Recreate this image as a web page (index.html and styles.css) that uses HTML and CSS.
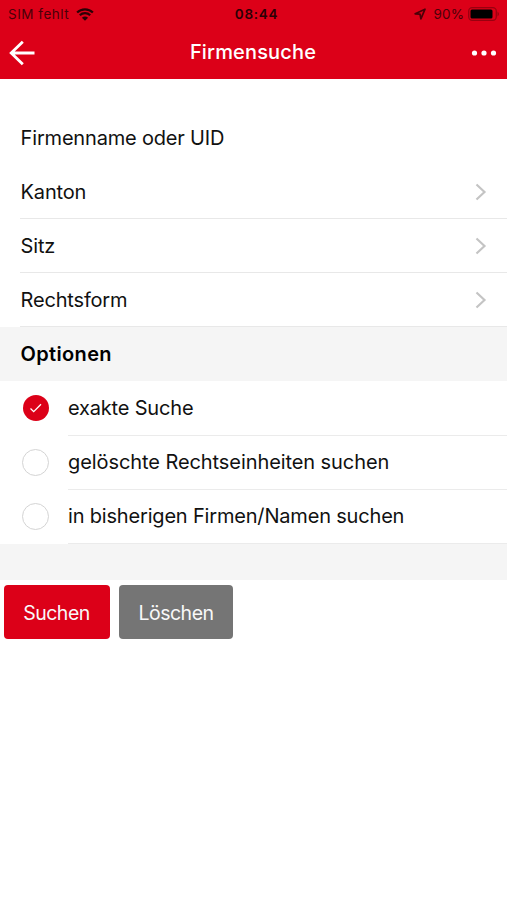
FILE: index.html
```html
<!DOCTYPE html>
<html lang="de">
<head>
<meta charset="utf-8">
<title>Firmensuche</title>
<link rel="stylesheet" href="styles.css">
</head>
<body>
<header class="header">
  <div class="status">
    <div class="status-left">
      <span class="carrier">SIM fehlt</span>
      <svg class="wifi" width="18" height="13" viewBox="0 0 18 13"><path d="M1.1 4.5C5.4.2 12.6.2 16.9 4.5M3.8 7.3c2.8-2.8 7.6-2.8 10.4 0" fill="none" stroke="currentColor" stroke-width="2.2"/><path d="M9 12.8 5.9 9.7c1.7-1.6 4.500-1.600 6.200 0z" fill="currentColor"/></svg>
    </div>
    <span class="time">08:44</span>
    <div class="status-right">
      <svg class="locate" width="12" height="12" viewBox="0 0 12 12"><path d="M11 1.200 1.200 5.800 6 6.200 6.900 10.800z" fill="none" stroke="currentColor" stroke-width="1.700" stroke-linejoin="round"/></svg>
      <span class="percent">90%</span>
      <svg class="battery" width="32" height="14" viewBox="0 0 32 14"><rect x=".7" y=".7" width="27.600" height="12.600" rx="3.500" fill="none" stroke="#99000f" stroke-width="1.300"/><rect x="2.500" y="2.500" width="22" height="9" rx="1.500" fill="#000"/><path d="M29.500 4.500q3 2.500 0 5z" fill="#99000f"/></svg>
    </div>
  </div>
  <div class="nav">
    <svg width="26" height="26" viewBox="0 0 26 26"><path d="M13.800 1.700 2.200 13 13.800 24.300M2.200 13H25.500" fill="none" stroke="#fff" stroke-width="2.800"/></svg>
    <h1 class="title">Firmensuche</h1>
    <svg width="26" height="6" viewBox="0 0 26 6" fill="#fff"><circle cx="3.500" cy="3" r="2.600"/><circle cx="13" cy="3" r="2.600"/><circle cx="22.500" cy="3" r="2.600"/></svg>
  </div>
</header>
<main>
  <div class="field"><span>Firmenname oder UID</span></div>
  <div class="row"><span>Kanton</span><svg class="chevron" width="12" height="18" viewBox="0 0 12 18"><path d="m1.500 1.500 8 7.500-8 7.500"/></svg></div>
  <div class="row"><span>Sitz</span><svg class="chevron" width="12" height="18" viewBox="0 0 12 18"><path d="m1.500 1.500 8 7.500-8 7.500"/></svg></div>
  <div class="row"><span>Rechtsform</span><svg class="chevron" width="12" height="18" viewBox="0 0 12 18"><path d="m1.500 1.500 8 7.500-8 7.500"/></svg></div>
  <h2 class="section">Optionen</h2>
  <div class="option"><span class="radio checked"><svg width="14" height="12" viewBox="0 0 14 12"><path d="m1.500 6.500 3.200 3.200 7.300-7.400" fill="none" stroke="#fff" stroke-width="1.300"/></svg></span><div class="option-label">exakte Suche</div></div>
  <div class="option"><span class="radio"></span><div class="option-label wide">gelöschte Rechtseinheiten suchen</div></div>
  <div class="option"><span class="radio"></span><div class="option-label">in bisherigen Firmen/Namen suchen</div></div>
  <div class="spacer"></div>
  <div class="actions"><button class="button primary">Suchen</button><button class="button secondary">Löschen</button></div>
</main>
</body>
</html>
```

FILE: styles.css
```css
* { box-sizing: border-box; }
body { margin: 0; background: #fff; color: #111; font-family: Inter, "Liberation Sans", sans-serif; font-size: 20px; letter-spacing: -0.18px; }
svg { display: block; flex: none; }
.header { height: 79px; background: #dc0018; }
.status { height: 27px; padding: 0 7px 0 8px; display: grid; grid-template-columns: 1fr auto 1fr; align-items: center; color: #4a0008; font-size: 13.5px; line-height: 28px; letter-spacing: 0.5px; }
.status-left, .status-right { display: flex; align-items: center; }
.status-left { gap: 7px; }
.wifi { color: #2b0005; }
.status-right { justify-content: flex-end; }
.time { padding-left: 5px; color: #2b0005; font-weight: 600; letter-spacing: 0.7px; }
.percent { margin: 0 4px 0 8px; letter-spacing: 0.1px; }
.nav { height: 51px; padding: 0 10px 0 9px; display: flex; align-items: center; justify-content: space-between; }
.title { margin: 0; padding-bottom: 2px; color: #fff; font-size: 20px; font-weight: 500; letter-spacing: 0.15px; }
.field { height: 54px; margin-top: 31.600px; padding: 0 0 0 20.600px; display: flex; align-items: center; }
.row { height: 54.200px; margin-left: 20px; padding: 1px 20px 0 0.600px; display: flex; align-items: center; justify-content: space-between; border-bottom: 1px solid #e8e8e8; }
.chevron { fill: none; stroke: #c4c4c4; stroke-width: 2.200; }
.section { height: 54.200px; margin: 0; padding-left: 20.500px; display: flex; align-items: center; background: #f5f5f5; color: #000; font-size: 20px; font-weight: 600; letter-spacing: 0.35px; }
.option { height: 54.200px; padding-left: 22px; display: flex; align-items: center; gap: 19px; }
.option-label { height: 100%; flex: 1; display: flex; align-items: center; border-bottom: 1px solid #ebebeb; }
.wide { letter-spacing: -0.08px; }
.radio { width: 27px; height: 27px; border: 1.500px solid #d4d4d4; border-radius: 50%; display: flex; align-items: center; justify-content: center; }
.checked { width: 26px; height: 26px; margin: 0 0 0 1px; border: 0; background: #dc0018; }
.spacer { height: 36px; background: #f5f5f5; }
.actions { display: flex; gap: 9.500px; padding: 5px 3.500px; }
.button { height: 54.500px; padding: 1px 0 0; border: 0; border-radius: 4px; color: #f8f8f8; font: inherit; font-size: 19.5px; letter-spacing: -0.5px; }
.primary { width: 106px; background: #dc0018; }
.secondary { width: 114px; background: #757575; }
```
